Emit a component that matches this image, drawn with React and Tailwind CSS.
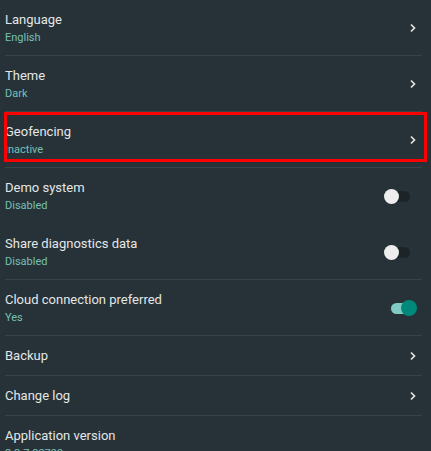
import React from "react";

function Chevron() {
  return (
    <svg width="8" height="10" viewBox="0 0 8 10" className="shrink-0 mr-[5px]">
      <path d="M2 1.5 L5.5 5 L2 8.5" stroke="#e8e8e8" strokeWidth="1.6" fill="none" />
    </svg>
  );
}

function Toggle({ on }) {
  if (on) {
    return (
      <div className="flex items-center mr-[5px]">
        <div className="w-[22px] h-[11px] rounded-full bg-[#80cbc4]" />
        <div className="w-[16px] h-[16px] -ml-[12px] rounded-full bg-[#00897b]" />
      </div>
    );
  }
  return (
    <div className="flex items-center mr-[12px]">
      <div className="w-[15px] h-[15px] rounded-full bg-[#eeeeee] z-10" />
      <div className="w-[22px] h-[11px] -ml-[11px] rounded-full bg-[#1c2427]" />
    </div>
  );
}

function Row({ title, sub, right, h = "h-[56px]", divider = true, highlight = false }) {
  return (
    <div className="relative pl-[5px] pr-[9px]">
      <div className={`${h} flex items-center ${divider ? "border-b border-[#374348] pt-px" : ""}`}>
        <div className="flex-1 flex flex-col justify-center">
          <div className="text-[13px] leading-[16px] text-[#e4e6e7]">{title}</div>
          {sub && <div className="text-[11px] leading-[14px] mt-[3px] text-[#76c0b6]">{sub}</div>}
        </div>
        {right}
      </div>
      {highlight && (
        <div className="absolute left-[4px] top-0 w-[423px] h-[50px] border-[3px] border-[#ff0000]" />
      )}
    </div>
  );
}

export default function App() {
  return (
    <div
      className="w-[431px] h-[451px] overflow-hidden bg-[#263238] flex flex-col"
      style={{ fontFamily: "Roboto, 'Liberation Sans', sans-serif" }}
    >
      <Row title="Language" sub="English" right={<Chevron />} />
      <Row title="Theme" sub="Dark" right={<Chevron />} />
      <Row title="Geofencing" sub="Inactive" right={<Chevron />} highlight />
      <Row title="Demo system" sub="Disabled" right={<Toggle on={false} />} divider={false} />
      <Row title="Share diagnostics data" sub="Disabled" right={<Toggle on={false} />} />
      <Row title="Cloud connection preferred" sub="Yes" right={<Toggle on />} />
      <Row title="Backup" right={<Chevron />} h="h-[40px]" />
      <Row title="Change log" right={<Chevron />} h="h-[40px]" />
      <Row title="Application version" sub="2.2.7.23799" right={null} divider={false} />
    </div>
  );
}
